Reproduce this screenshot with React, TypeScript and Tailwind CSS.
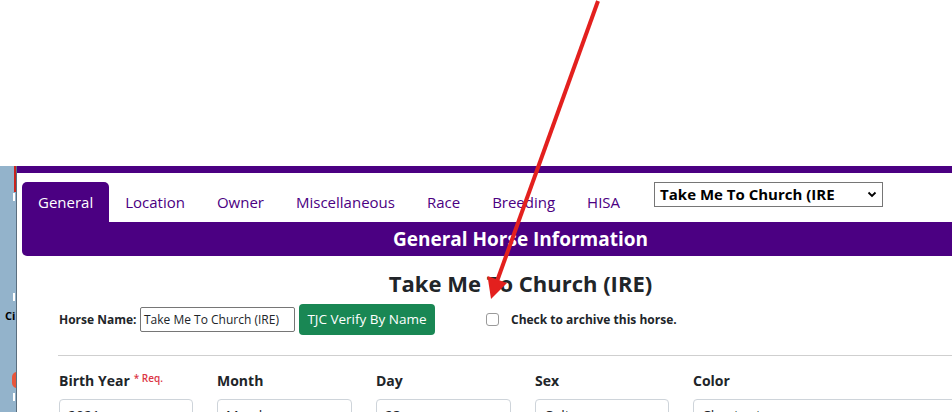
const tabs = ['Location', 'Owner', 'Miscellaneous', 'Race', 'Breeding', 'HISA'];

const fields = [
  { label: 'Birth Year', req: true, value: '2021', w: 'w-[134px]' },
  { label: 'Month', value: 'March', w: 'w-[135px]' },
  { label: 'Day', value: '23', w: 'w-[135px]' },
  { label: 'Sex', value: 'Colt', w: 'w-[134px]' },
  { label: 'Color', value: 'Chestnut', w: 'w-[300px]' },
];

function Arrow() {
  return (
    <svg className="pointer-events-none absolute left-0 top-0" width="952" height="412" viewBox="0 0 952 412">
      <line x1="598" y1="1" x2="496" y2="284" stroke="#e3201e" strokeWidth="4" />
      <polygon points="491,299 487.5,276 507,283" fill="#e3201e" />
    </svg>
  );
}

export default function App() {
  return (
    <div className="relative h-[412px] w-[952px] overflow-hidden bg-white font-['Open_Sans',sans-serif] text-[#212529]">
      <div className="h-[166px]" />
      <div className="flex h-[246px]">
        {/* desktop strip behind the window */}
        <div className="relative w-[17px] shrink-0 overflow-hidden border-r border-[#5a6f80] bg-[#93b3cb]">
          <div className="absolute right-0 top-0 h-[26px] w-[2px] bg-[#c8231c]" />
          <div className="absolute right-[1px] top-[27px] h-[8px] w-[2px] bg-white" />
          <div className="absolute right-[1px] top-[127px] h-[8px] w-[2px] bg-white" />
          <div className="absolute left-[5px] top-[144px] text-[11px] font-bold leading-none text-black">Ci</div>
          <div className="absolute -right-[6px] top-[206px] h-[16px] w-[10px] rounded-full bg-[#e8553a]" />
          <div className="absolute right-[1px] top-[227px] h-[8px] w-[2px] bg-white" />
        </div>
        <div className="min-w-0 flex-1 border-t-[7px] border-[#4b0082]">
          <div className="w-[1002px] pl-[5px] pt-[9px]">
            <div className="flex items-center">
              <div className="rounded-t-[5px] bg-[#4b0082] px-4 py-2 text-[15px] leading-6 text-white">General</div>
              {tabs.map((t) => (
                <div key={t} className="px-4 py-2 text-[15px] leading-6 text-[#4b0082]">
                  {t}
                </div>
              ))}
              <div className="ml-[18px] -mt-[15px] flex h-[25px] w-[229px] items-center justify-between border border-[#767676] px-[5px] text-[15px] font-bold text-black">
                <span>Take Me To Church (IRE</span>
                <svg width="10" height="7" viewBox="0 0 10 7">
                  <path d="M1.5 1.5 5 5 8.5 1.5" fill="none" stroke="#000" strokeWidth="1.8" />
                </svg>
              </div>
            </div>
            <div className="flex h-[34px] items-center justify-center rounded-b-[5px] bg-[#4b0082] text-[19px] font-bold text-white">
              General Horse Information
            </div>
            <div className="pt-[12px] text-center text-[22px] font-bold leading-[30px]">Take Me To Church (IRE)</div>
            <div className="flex items-center pl-[37px] pt-[6px]">
              <span className="w-[81px] text-[12px] font-bold">Horse Name:</span>
              <div className="flex h-[25px] w-[155px] items-center rounded-[2px] border border-[#767676] px-[3px] text-[12px]">
                Take Me To Church (IRE)
              </div>
              <div className="ml-[4px] flex h-[31px] w-[136px] items-center justify-center rounded-[4px] bg-[#198754] text-[13.5px] text-white">
                TJC Verify By Name
              </div>
              <div className="ml-[51px] h-[13px] w-[13px] rounded-[3px] border border-[#9a9a9a] bg-white" />
              <span className="ml-[12px] text-[12px] font-bold">Check to archive this horse.</span>
            </div>
            <div className="ml-[36px] mt-[20px] border-t border-[#cfcfcf]" />
            <div className="flex gap-[24px] pl-[37px] pt-[15px]">
              {fields.map((f) => (
                <div key={f.label} className={f.w}>
                  <div className="flex items-start text-[14px] font-bold leading-[20px]">
                    {f.label}
                    {f.req && <span className="ml-[4px] -mt-[3px] text-[10px] font-semibold text-[#dc3545]">* Req.</span>}
                  </div>
                  <div className="mt-[8px] flex h-[32px] items-start justify-between rounded-[4px] border border-[#ced4da] px-[8px] pt-[6px] text-[14px] leading-[20px]">
                    <span>{f.value}</span>
                    <svg className="mt-[5px]" width="6" height="10" viewBox="0 0 6 10">
                      <path d="M1 3.5 3 1.5 5 3.5M1 6.5 3 8.5 5 6.5" fill="none" stroke="#343a40" strokeWidth="1" />
                    </svg>
                  </div>
                </div>
              ))}
            </div>
          </div>
        </div>
      </div>
      <Arrow />
    </div>
  );
}
